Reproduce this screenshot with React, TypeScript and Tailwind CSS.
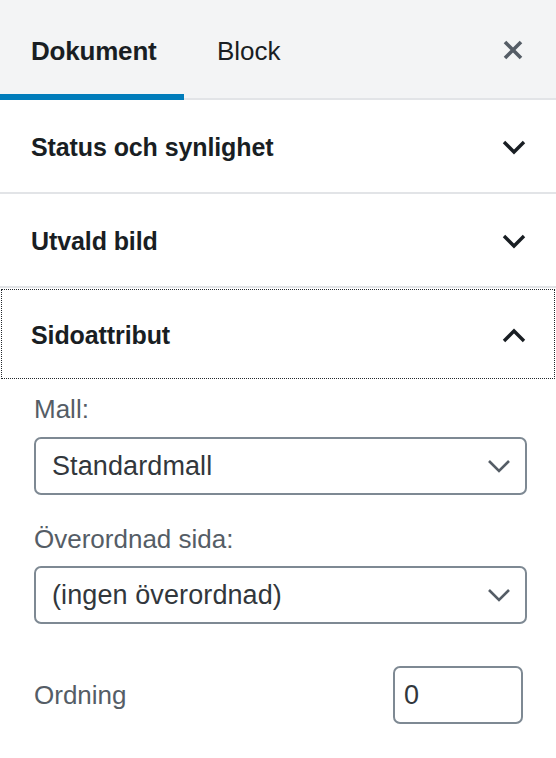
function Chevron({ up = false }: { up?: boolean }) {
    return (
        <svg width="24" height="15" viewBox="0 0 24 15" fill="none" className="shrink-0">
            <path
                d={up ? 'M2 13 L12 3 L22 13' : 'M2 2 L12 12 L22 2'}
                stroke="#191e23"
                strokeWidth="3.4"
            />
        </svg>
    );
}

function SectionHeader({ title, open = false }: { title: string; open?: boolean }) {
    return (
        <button
            className={
                'w-full flex items-center justify-between pl-[31px] pr-[30px] pt-[3px] text-left ' +
                (open
                    ? 'h-[92px] outline-1 outline-dotted outline-[#23282d] -outline-offset-2'
                    : 'h-[94px] border-b-2 border-[#e2e4e7]')
            }
        >
            <span className="text-[25px] font-bold text-[#191e23] tracking-[-0.1px]">{title}</span>
            <Chevron up={open} />
        </button>
    );
}

function Select({ value }: { value: string }) {
    return (
        <div className="h-[58px] border-2 border-[#7e8993] rounded-[7px] flex items-center justify-between pl-[16px] pr-[14px] bg-white">
            <span className="text-[27px] text-[#32373c] tracking-[0.1px]">{value}</span>
            <svg width="24" height="14" viewBox="0 0 24 14" fill="none">
                <path d="M2 2 L12 12 L22 2" stroke="#555d66" strokeWidth="2.6" />
            </svg>
        </div>
    );
}

export default function App() {
    return (
        <div className="w-[556px] h-[758px] bg-white overflow-hidden font-['Liberation_Sans',Arial,sans-serif]">
            <div className="h-[100px] bg-[#f3f4f5] border-b-2 border-[#e2e4e7] flex items-stretch">
                <button className="relative w-[184px] pl-[31px] pt-[4px] flex items-center text-[26px] font-bold text-[#191e23] tracking-[-0.2px]">
                    Dokument
                    <span className="absolute left-0 right-0 -bottom-[2px] h-[6px] bg-[#007cba]" />
                </button>
                <button className="pl-[33px] pt-[4px] flex items-center text-[26px] text-[#191e23]">
                    Block
                </button>
                <button className="ml-auto mr-[33px] pt-[2px] flex items-center">
                    <svg width="20" height="20" viewBox="0 0 20 20" fill="none">
                        <path d="M2 2 L18 18 M18 2 L2 18" stroke="#555d66" strokeWidth="3.6" />
                    </svg>
                </button>
            </div>

            <SectionHeader title="Status och synlighet" />
            <SectionHeader title="Utvald bild" />
            <SectionHeader title="Sidoattribut" open />

            <div className="pl-[34px] pr-[29px] pt-[14px]">
                <label className="block text-[26px] leading-[30px] text-[#555d66] mb-[13px]">Mall:</label>
                <Select value="Standardmall" />

                <label className="block text-[26px] leading-[30px] text-[#555d66] mt-[29px] mb-[12px]">
                    Överordnad sida:
                </label>
                <Select value="(ingen överordnad)" />

                <div className="flex items-center justify-between mt-[42px] pr-[4px]">
                    <span className="text-[26px] leading-[30px] text-[#555d66]">Ordning</span>
                    <div className="w-[130px] h-[58px] border-2 border-[#7e8993] rounded-[7px] flex items-center pl-[9px] text-[27px] text-[#32373c]">
                        0
                    </div>
                </div>
            </div>
        </div>
    );
}
